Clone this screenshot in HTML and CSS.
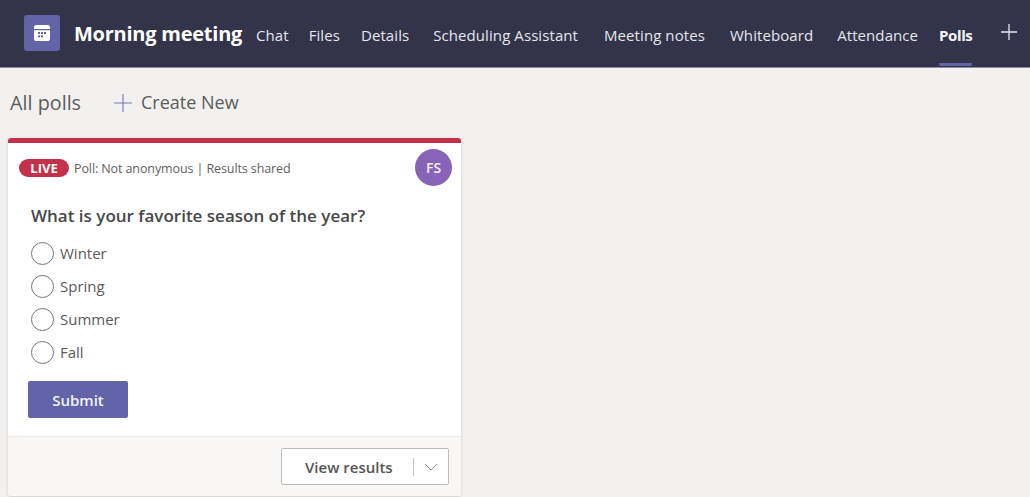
FILE: index.html
```html
<!DOCTYPE html>
<html lang="en">
<head>
<meta charset="utf-8">
<title>Morning meeting - Polls</title>
<link rel="stylesheet" href="styles.css">
</head>
<body>
<header class="topbar">
  <div class="app-icon">
    <svg width="16" height="16" viewBox="0 0 16 16" aria-hidden="true">
      <path fill="#fff" d="M2.6 0h10.8A2.6 2.6 0 0 1 16 2.6V4H0V2.6A2.6 2.6 0 0 1 2.6 0zM0 5.2h16v8.2a2.6 2.6 0 0 1-2.6 2.6H2.6A2.6 2.6 0 0 1 0 13.4z"/>
      <g fill="#6264a7"><rect x="4" y="7" width="2" height="2"/><rect x="7" y="7" width="2" height="2"/><rect x="10" y="7" width="2" height="2"/><rect x="4" y="10.4" width="2" height="2"/><rect x="7" y="10.4" width="2" height="2"/></g>
    </svg>
  </div>
  <h1 class="title">Morning meeting</h1>
  <nav class="tabs">
    <a class="tab tab-chat">Chat</a>
    <a class="tab tab-files">Files</a>
    <a class="tab tab-details">Details</a>
    <a class="tab tab-sched">Scheduling Assistant</a>
    <a class="tab tab-notes">Meeting notes</a>
    <a class="tab tab-white">Whiteboard</a>
    <a class="tab tab-att">Attendance</a>
    <a class="tab tab-polls active">Polls</a>
  </nav>
  <svg class="add-tab" width="16" height="16" viewBox="0 0 16 16" aria-hidden="true"><path d="M8 0v16M0 8h16" stroke="#e6e6ee" stroke-width="1.3" fill="none"/></svg>
</header>
<main class="content">
  <div class="toolbar">
    <span class="all-polls">All polls</span>
    <span class="create">
      <svg width="18" height="18" viewBox="0 0 18 18" aria-hidden="true"><path d="M9 0v18M0 9h18" stroke="#7678ae" stroke-width="1.1" fill="none"/></svg>
      Create New
    </span>
  </div>
  <section class="card">
    <div class="card-body">
      <div class="card-head">
        <span class="live">LIVE</span>
        <span class="meta">Poll: Not anonymous | Results shared</span>
        <span class="avatar">FS</span>
      </div>
      <h2 class="question">What is your favorite season of the year?</h2>
      <ul class="options">
        <li class="option"><span class="radio"></span>Winter</li>
        <li class="option"><span class="radio"></span>Spring</li>
        <li class="option"><span class="radio"></span>Summer</li>
        <li class="option"><span class="radio"></span>Fall</li>
      </ul>
      <button class="submit" type="button">Submit</button>
    </div>
    <footer class="card-foot">
      <div class="results">
        <span class="results-label">View results</span>
        <span class="results-sep"></span>
        <svg width="14" height="8" viewBox="0 0 14 8" aria-hidden="true"><path d="M1 1l6 6 6-6" stroke="#8a8a8a" stroke-width="1" fill="none"/></svg>
      </div>
    </footer>
  </section>
</main>
</body>
</html>
```
FILE: styles.css
```css
* { box-sizing: border-box; }
html, body { margin: 0; padding: 0; }
body {
  width: 1030px;
  height: 497px;
  overflow: hidden;
  background: #f2f1ef;
  font-family: "Open Sans", "Noto Sans", sans-serif;
  color: #4f4f4f;
}
.topbar {
  height: 68px;
  background: #33344a;
  border-bottom: 1px solid #8f8f9c;
  display: flex;
  align-items: center;
  padding-left: 24px;
  color: #e6e6ea;
}
.app-icon {
  width: 36px;
  height: 36px;
  margin-top: -1px;
  background: #6264a7;
  border-radius: 3px;
  display: flex;
  align-items: center;
  justify-content: center;
}
.title {
  margin: 0 0 0 14px;
  font-size: 20px;
  font-weight: 700;
  color: #fff;
  white-space: nowrap;
  width: 168px;
  letter-spacing: -0.24px;
}
.tabs {
  display: flex;
  align-self: stretch;
  margin-left: 14px;
}
.tab {
  font-size: 15px;
  line-height: 70px;
  height: 66px;
  white-space: nowrap;
  letter-spacing: 0.08px;
}
.tab-files { margin-left: 20px; }
.tab-details { margin-left: 21px; }
.tab-sched { margin-left: 24px; }
.tab-notes { margin-left: 26px; }
.tab-white { margin-left: 25px; }
.tab-att { margin-left: 24px; }
.tab-polls { margin-left: 21px; }
.tab.active {
  font-weight: 700;
  color: #f4f4f6;
  letter-spacing: -0.4px;
  border-bottom: 3px solid #6264a7;
  border-radius: 2px;
}
.add-tab { margin-left: 29px; margin-top: -4px; }
.content { padding: 0 8px; }
.toolbar {
  height: 70px;
  padding: 22px 0 0 2px;
  display: flex;
  align-items: flex-start;
  font-size: 18px;
  line-height: 25px;
  color: #5c5c5c;
}
.all-polls { width: 104px; font-size: 19.8px; }
.create { display: flex; align-items: center; gap: 9px; }
.card {
  width: 453px;
  height: 358px;
  background: #fff;
  border-top: 5px solid #c4314b;
  border-radius: 3px;
  box-shadow: 0 1px 3px rgba(0,0,0,.15);
  display: flex;
  flex-direction: column;
  overflow: hidden;
}
.card-body { flex: 1; padding: 6px 9px 0 11px; }
.card-head { display: flex; align-items: center; height: 37px; }
.live {
  width: 50px;
  height: 18px;
  background: #c4314b;
  color: #fff;
  font-size: 13px;
  font-weight: 700;
  line-height: 18px;
  text-align: center;
  border-radius: 9px;
}
.meta {
  margin-left: 5px;
  padding-top: 2px;
  font-size: 12.5px;
  letter-spacing: -0.1px;
  color: #616161;
}
.avatar {
  margin-left: auto;
  width: 37px;
  height: 37px;
  border-radius: 50%;
  background: #8764b8;
  color: #f5f0fa;
  font-size: 14px;
  font-weight: 600;
  display: flex;
  align-items: center;
  justify-content: center;
}
.question {
  margin: 18px 0 0 12px;
  font-size: 17px;
  line-height: 24px;
  font-weight: 600;
  color: #484848;
}
.options { list-style: none; margin: 8px 0 0 12px; padding: 0; }
.option {
  height: 33px;
  display: flex;
  align-items: center;
  font-size: 15px;
  color: #5a5a5a;
}
.radio {
  width: 23px;
  height: 23px;
  margin: 2px 6px 0 0;
  border: 1.5px solid #777;
  border-radius: 50%;
}
.submit {
  display: block;
  margin: 13px 0 0 9px;
  width: 100px;
  height: 37px;
  border: 0;
  border-radius: 2px;
  background: #6264a7;
  color: #f2f2f8;
  font: 600 15px "Open Sans", sans-serif;
}
.card-foot {
  height: 60px;
  background: #f8f7f5;
  border-top: 1px solid #eceae8;
  display: flex;
  justify-content: flex-end;
  padding: 11px 12px 0 0;
}
.results {
  width: 168px;
  height: 37px;
  background: #fff;
  border: 1px solid #bdbdbd;
  border-radius: 2px;
  display: flex;
  align-items: center;
  font-size: 15px;
  font-weight: 600;
  color: #555;
}
.results-label { margin-left: 23px; width: 108px; }
.results-sep { width: 1px; height: 18px; background: #c4c4c4; margin-right: 10px; }
```
